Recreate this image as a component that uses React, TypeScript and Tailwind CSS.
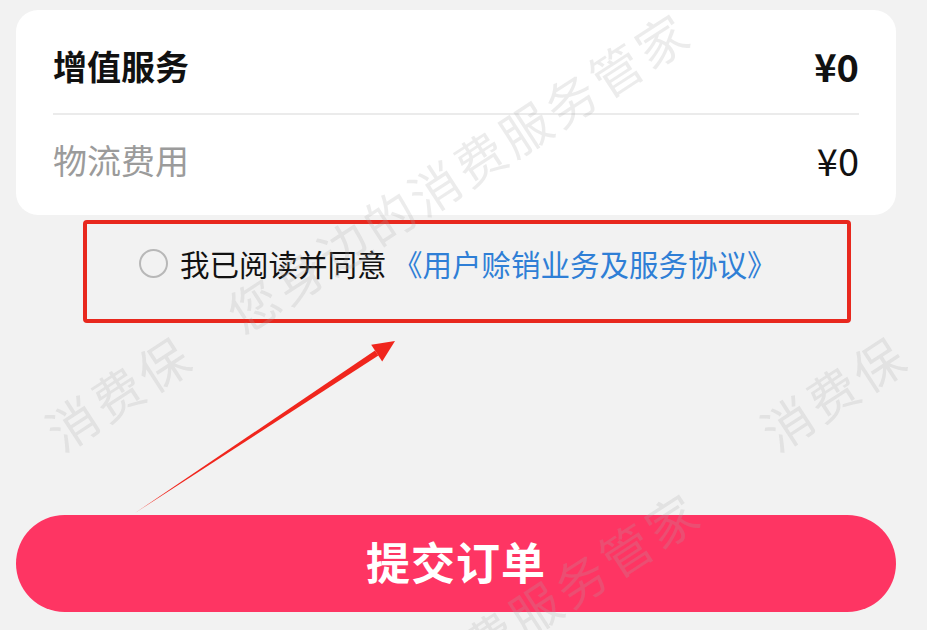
const watermarkLines = [
  { left: 50, top: 410 },
  { left: 765, top: 410 },
  { left: 60, top: 890 },
];

function Watermark() {
  return (
    <div className="pointer-events-none absolute inset-0 overflow-hidden">
      {watermarkLines.map((line, i) => (
        <span
          key={i}
          className="absolute origin-left whitespace-nowrap text-[50px] leading-[50px] tracking-[4px] text-[rgba(170,170,170,0.22)] rotate-[-33deg]"
          style={{ left: line.left, top: line.top }}
        >
          消费保　您身边的消费服务管家
        </span>
      ))}
    </div>
  );
}

function Arrow() {
  return (
    <svg className="pointer-events-none absolute inset-0" width="927" height="630" viewBox="0 0 927 630">
      <polygon points="135,513 378.4,355.6 375,350.6" fill="#f0261d" />
      <polygon points="395,341 382.2,361.4 371.2,344.8" fill="#f0261d" />
    </svg>
  );
}

export default function App() {
  return (
    <div
      className="relative h-[630px] w-[927px] overflow-hidden bg-[#f2f2f2]"
      style={{ fontFamily: '"Noto Sans CJK SC", "Noto Sans", sans-serif' }}
    >
      <div className="pl-4 pr-[31px] pt-[10px]">
        <div className="rounded-[22px] bg-white px-[37px]">
          <div className="flex h-[103px] items-center justify-between pt-[8px]">
            <span className="text-[34px] font-bold text-[#111]">增值服务</span>
            <span className="text-[38px] font-bold text-[#111]">¥0</span>
          </div>
          <div className="h-[2px] bg-[#ebebeb]" />
          <div className="flex h-[100px] items-center justify-between pb-[12px]">
            <span className="text-[34px] text-[#9b9b9b]">物流费用</span>
            <span className="text-[38px] text-[#111]">¥0</span>
          </div>
        </div>

        <div className="ml-[67px] mr-[45px] mt-[5px] h-[103px] rounded-[4px] border-4 border-[#e8281e] pl-[52px] pt-[21px]">
          <div className="flex items-center gap-[12px]">
            <span className="h-[29px] w-[29px] shrink-0 rounded-full border-2 border-[#b8b8b8]" />
            <span className="whitespace-nowrap text-[29.5px] leading-[36px] text-[#111]">
              我已阅读并同意 <span className="text-[#2f7fd6]">《用户赊销业务及服务协议》</span>
            </span>
          </div>
        </div>

        <button className="mt-[192px] flex h-[97px] w-full items-center justify-center rounded-full bg-[#fe3563] pb-[6px]">
          <span className="text-[44px] font-semibold tracking-[1px] text-white">提交订单</span>
        </button>
      </div>
      <Arrow />
      <Watermark />
    </div>
  );
}
